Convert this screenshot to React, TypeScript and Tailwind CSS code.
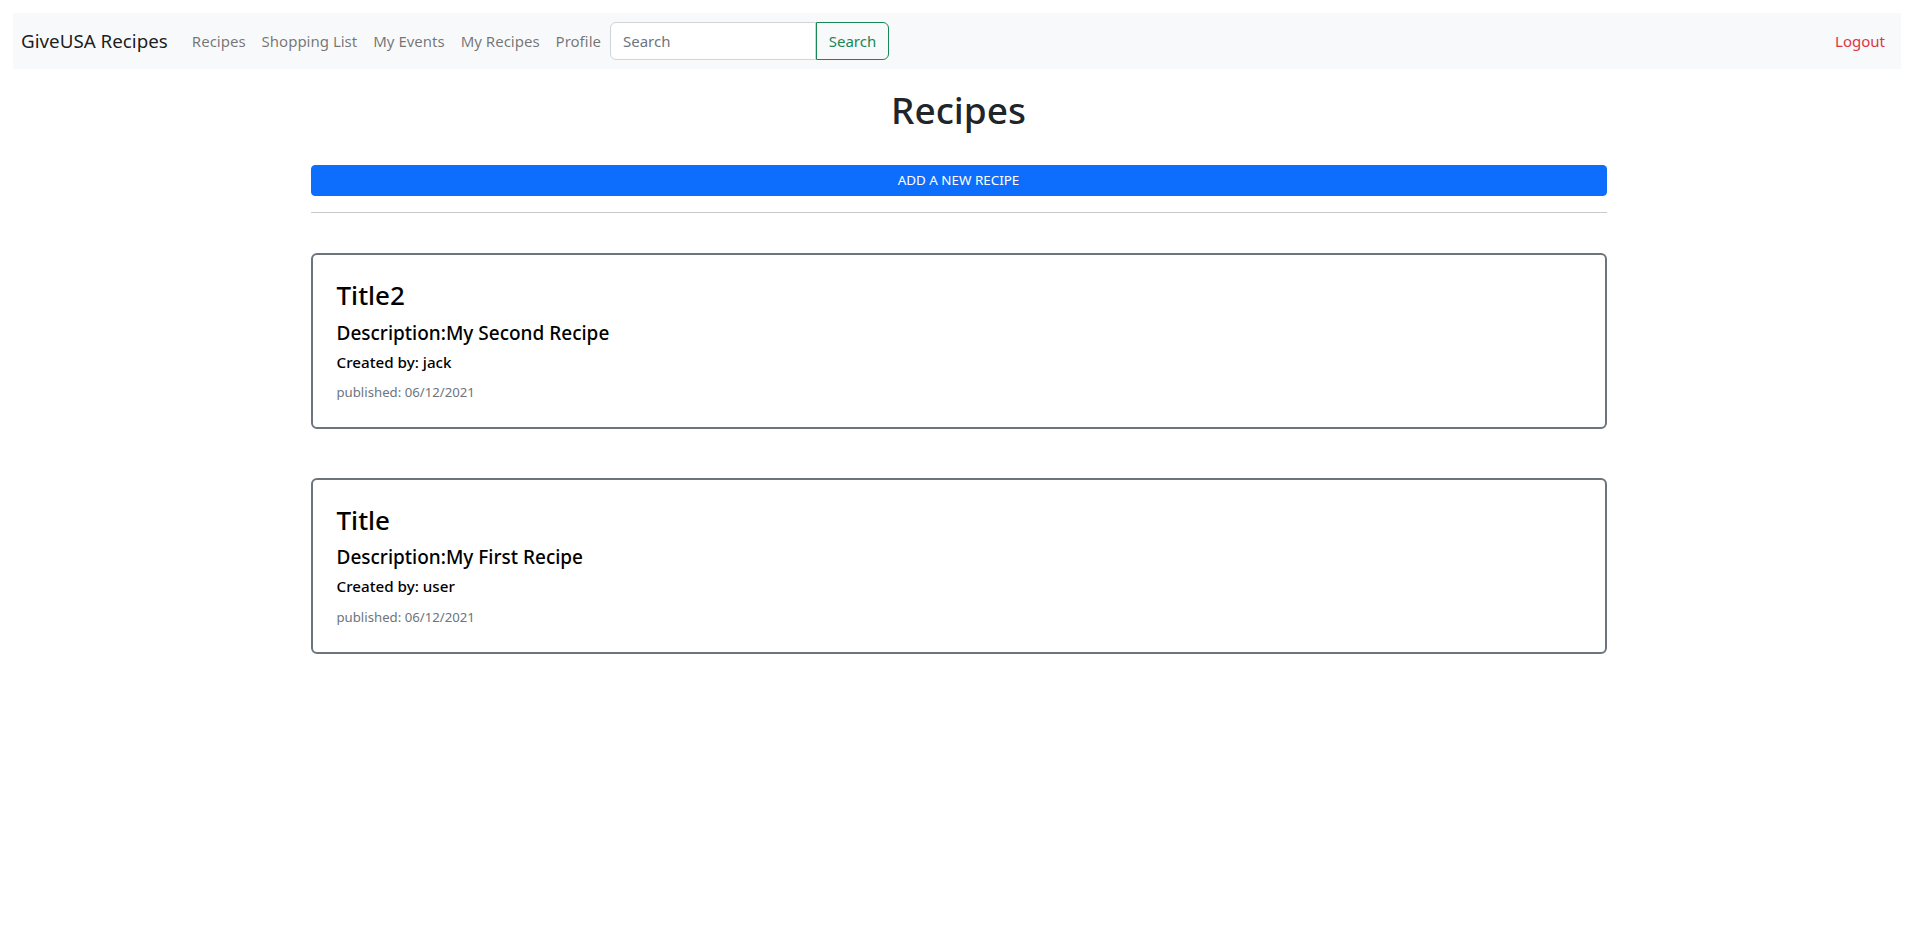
import React from 'react';

const font = { fontFamily: '"Noto Sans", "Open Sans", sans-serif' };

type Recipe = {
  title: string;
  description: string;
  author: string;
  published: string;
};

const recipes: Recipe[] = [
  { title: 'Title2', description: 'My Second Recipe', author: 'jack', published: '06/12/2021' },
  { title: 'Title', description: 'My First Recipe', author: 'user', published: '06/12/2021' },
];

function Navbar() {
  const links = ['Recipes', 'Shopping List', 'My Events', 'My Recipes', 'Profile'];
  return (
    <nav className="ml-[13px] mr-4 mt-[13px] flex h-14 items-center bg-[#f8f9fa] px-2">
      <a href="#" className="mr-4 text-[18.8px] leading-[30px] text-[#000000e6]">
        GiveUSA Recipes
      </a>
      <ul className="flex items-center">
        {links.map((link) => (
          <li key={link}>
            <a href="#" className="block px-2 py-2 text-[15px] leading-6 text-[#0000008c]">
              {link}
            </a>
          </li>
        ))}
      </ul>
      <form className="ml-[1px] flex items-center" onSubmit={(e) => e.preventDefault()}>
        <input
          type="text"
          placeholder="Search"
          className="h-[38px] w-[206px] rounded-l-md border border-[#ced4da] bg-white px-3 text-[15px] text-[#212529] placeholder:text-[#6c757d] focus:outline-none"
        />
        <button
          type="submit"
          className="h-[38px] w-[73px] rounded-r-md border border-[#198754] text-[15px] text-[#198754]"
        >
          Search
        </button>
      </form>
      <a href="#" className="ml-auto block px-2 py-2 text-[15px] leading-6 text-[#dc3545]">
        Logout
      </a>
    </nav>
  );
}

function RecipeCard({ recipe }: { recipe: Recipe }) {
  return (
    <div className="rounded-md border-2 border-[#6c757d] bg-white p-6 text-black">
      <h3 className="mb-2 text-[26px] font-medium leading-[33.6px]">{recipe.title}</h3>
      <h5 className="mb-2 text-[19px] font-medium leading-[24px]">Description:{recipe.description}</h5>
      <h6 className="mb-[10px] text-[15.2px] font-medium leading-[19.2px]">Created by: {recipe.author}</h6>
      <p className="text-[13.2px] leading-[21px] text-[#6c757d]">published: {recipe.published}</p>
    </div>
  );
}

export default function App() {
  return (
    <div className="min-h-screen bg-white text-[#212529]" style={font}>
      <Navbar />
      <main className="mx-auto w-full max-w-[1320px] px-3">
        <h1 className="mt-[17px] text-center text-[37px] font-medium leading-[48px]">Recipes</h1>
        <button className="mt-[31px] w-full rounded border border-[#0d6efd] bg-[#0d6efd] px-2 py-1 text-[13.4px] leading-[21px] text-white">
          ADD A NEW RECIPE
        </button>
        <hr className="mt-4 border-t border-[#c8c9ca]" />
        <div className="mt-[40px] flex flex-col gap-[49px]">
          {recipes.map((r) => (
            <RecipeCard key={r.title} recipe={r} />
          ))}
        </div>
      </main>
    </div>
  );
}
